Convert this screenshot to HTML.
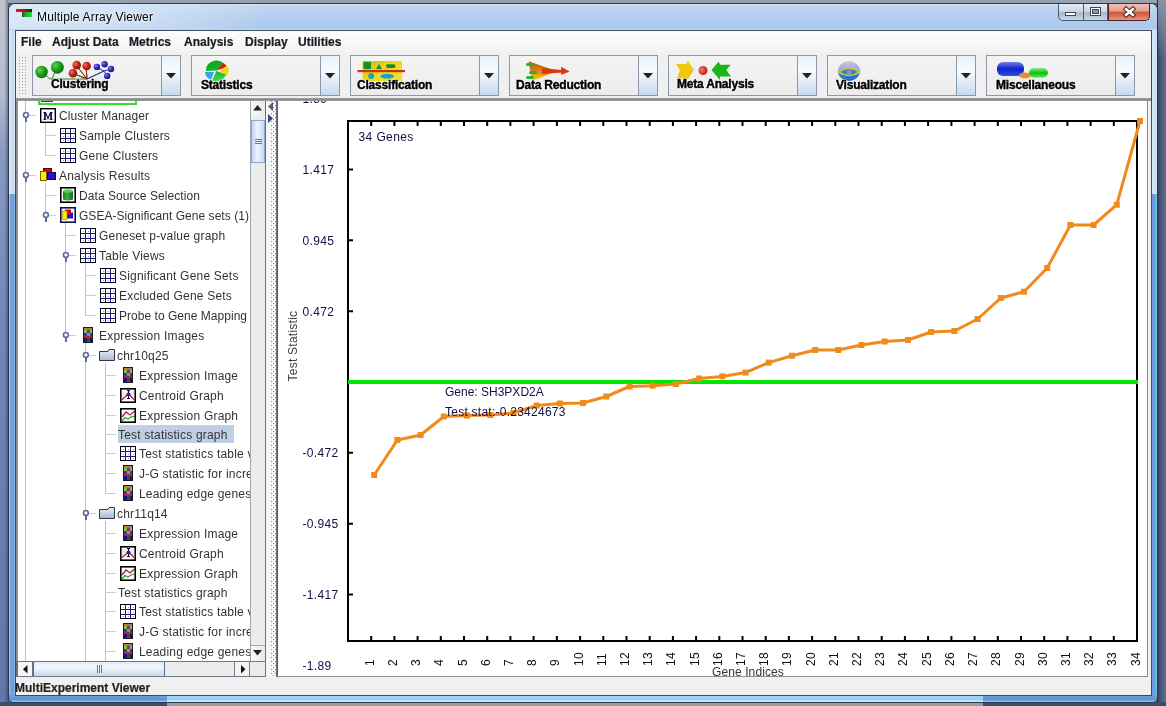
<!DOCTYPE html>
<html><head><meta charset="utf-8"><title>Multiple Array Viewer</title><style>
*{margin:0;padding:0;box-sizing:border-box}
html,body{width:1166px;height:706px;overflow:hidden}
body{position:relative;font-family:"Liberation Sans", sans-serif;background:#4a5878}
.a{position:absolute}
.t{position:absolute;white-space:nowrap;font-size:12px;line-height:14px;color:#333}
</style></head><body>
<div id="w" style="position:absolute;left:0;top:0;width:1166px;height:706px;will-change:transform">
<div class="a" style="left:0;top:0;width:1166px;height:3px;background:#98a0ae"></div>
<div class="a" style="left:0;top:0;width:8px;height:706px;background:linear-gradient(180deg,#c0c6d0 0,#b4bccc 95px,#8a9ac0 150px,#7088b8 320px,#6078a8 706px)"></div>
<div class="a" style="left:5px;top:0;width:3px;height:706px;background:linear-gradient(90deg,rgba(40,50,80,0.1),rgba(40,50,80,0.45))"></div>
<div class="a" style="left:1157px;top:0;width:9px;height:706px;background:linear-gradient(90deg,#102030 0,#3a4468 1px,#4a5878 4px,#5a7090 9px)"></div>
<div class="a" style="left:1158px;top:0;width:8px;height:60px;background:linear-gradient(180deg,#8a94a8,rgba(138,148,168,0))"></div>
<div class="a" style="left:0;top:702px;width:1166px;height:4px;background:#3c4c6c"></div>
<div class="a" style="left:167px;top:702px;width:816px;height:4px;background:#9a9ea2"></div>
<div class="a" style="left:8px;top:3px;width:1150px;height:700px;border:1px solid #283850;border-radius:7px 7px 5px 5px;background:linear-gradient(180deg,#bcd4ee 0,#a9c6e8 26px,#8cb4e4 40px,#6fa0dc 100%)"></div>
<div class="a" style="left:9px;top:4px;width:1148px;height:26px;border-radius:6px 6px 0 0;background:linear-gradient(180deg,#eef6fe 0,#c0d8f2 1px,#b4cfee 12px,#aac8ec 25px,#d8e8f8 26px)"></div>
<div class="a" style="left:9px;top:5px;width:260px;height:24px;border-radius:6px 0 0 0;background:linear-gradient(90deg,rgba(240,246,252,.65),rgba(240,246,252,.35) 60%,rgba(240,246,252,0))"></div>
<div class="a" style="left:9px;top:30px;width:7px;height:666px;background:linear-gradient(90deg,#b8dcf8 0,#78a8dc 1px,#6c9cd8 5px,#a8ccf0 6px)"></div>
<div class="a" style="left:9px;top:30px;width:6px;height:164px;background:linear-gradient(90deg,#f0f8ff 0,#d4e2f2 1px,#cad8ec 5px,#e0ecf8 6px)"></div>
<div class="a" style="left:15px;top:30px;width:1px;height:666px;background:#5a6878"></div>
<div class="a" style="left:1151px;top:30px;width:6px;height:666px;background:linear-gradient(90deg,#a8c8f0 0,#6a9ee0 1px,#6a9ee0 4px,#70c0e0 5px)"></div>
<div class="a" style="left:1151px;top:30px;width:6px;height:164px;background:linear-gradient(90deg,#e8f0fa 0,#d8e6f4 1px,#d4e4f4 4px,#c0e8f4 5px)"></div>
<div class="a" style="left:9px;top:695px;width:1148px;height:7px;border-radius:0 0 5px 5px;background:linear-gradient(180deg,#6aa2dc,#5c94d4 5px,#8cc0f0 6px)"></div>
<div class="a" style="left:167px;top:695px;width:816px;height:7px;background:linear-gradient(180deg,#a0d0f4,#98d0f8 5px,#d0ecfc 6px)"></div>
<div class="a" style="left:16px;top:9px;width:16px;height:3px;background:linear-gradient(90deg,#e01828,#b01020 50%,#202020)"></div>
<div class="a" style="left:22px;top:12px;width:10px;height:5px;background:linear-gradient(90deg,#404040,#10c020 40%,#20e030)"></div>
<div class="t" style="left:37px;top:10px;font-size:12px;letter-spacing:0.17px;color:#000;text-shadow:0 0 6px rgba(255,255,255,.9),0 0 3px rgba(255,255,255,.8)">Multiple Array Viewer</div>
<div class="a" style="left:1058px;top:4px;width:50px;height:17px;border:1px solid #4a5a70;border-top:none;border-radius:0 0 0 5px;background:linear-gradient(180deg,#e4ecf4,#ccd8e6 45%,#a8b8cc 55%,#c8d8ea)"></div>
<div class="a" style="left:1083px;top:4px;width:1px;height:16px;background:#4a5a70"></div>
<div class="a" style="left:1108px;top:4px;width:42px;height:17px;border:1px solid #502020;border-top:none;border-radius:0 0 5px 0;background:linear-gradient(180deg,#f0c0b4,#e4a090 42%,#d05840 52%,#d86850 70%,#e89888)"></div>
<div class="a" style="left:1065px;top:12px;width:11px;height:4px;border:1px solid #3a4a5a;background:#fff"></div>
<div class="a" style="left:1090px;top:7px;width:11px;height:9px;border:1px solid #3a4a5a;background:#fff"></div>
<div class="a" style="left:1092px;top:9px;width:7px;height:5px;border:1px solid #3a4a5a;background:#8898a8"></div>
<svg class="a" style="left:1122px;top:6px" width="14" height="12"><path d="M4 3 L11 9 M11 3 L4 9" stroke="#402020" stroke-width="4.4" stroke-linecap="square"/><path d="M4 3 L11 9 M11 3 L4 9" stroke="#fff" stroke-width="2.6" stroke-linecap="square"/></svg>
<div class="a" style="left:15px;top:30px;width:1137px;height:666px;border:1px solid #404a58;background:#f0f0f0"></div>
<div class="a" style="left:16px;top:31px;width:1135px;height:21px;background:linear-gradient(180deg,#fdfdfd,#f3f3f3)"></div>
<div class="t" style="left:21px;top:35px;font-weight:bold;font-size:12px;letter-spacing:0px;color:#1a1a24;-webkit-text-stroke:0.2px #1a1a24">File</div>
<div class="t" style="left:52px;top:35px;font-weight:bold;font-size:12px;letter-spacing:0px;color:#1a1a24;-webkit-text-stroke:0.2px #1a1a24">Adjust Data</div>
<div class="t" style="left:129px;top:35px;font-weight:bold;font-size:12px;letter-spacing:0px;color:#1a1a24;-webkit-text-stroke:0.2px #1a1a24">Metrics</div>
<div class="t" style="left:184px;top:35px;font-weight:bold;font-size:12px;letter-spacing:0px;color:#1a1a24;-webkit-text-stroke:0.2px #1a1a24">Analysis</div>
<div class="t" style="left:245px;top:35px;font-weight:bold;font-size:12px;letter-spacing:0px;color:#1a1a24;-webkit-text-stroke:0.2px #1a1a24">Display</div>
<div class="t" style="left:298px;top:35px;font-weight:bold;font-size:12px;letter-spacing:0px;color:#1a1a24;-webkit-text-stroke:0.2px #1a1a24">Utilities</div>
<div class="a" style="left:16px;top:52px;width:1135px;height:46px;background:#f0f0f0"></div>
<div class="a" style="left:16px;top:98px;width:1135px;height:2px;background:linear-gradient(180deg,#a8a8a8,#7c7c7c)"></div>
<div class="a" style="left:18px;top:56px;width:10px;height:39px;background-image:radial-gradient(circle,#a0a0a0 0.8px,transparent 1px);background-size:3px 3px"></div>
<div class="a" style="left:32px;top:55px;width:130px;height:41px;border:1px solid #8a98aa;background:linear-gradient(180deg,#f4f4f4,#ececec)"></div>
<div class="a" style="left:161px;top:55px;width:20px;height:41px;border:1px solid #8a98aa;background:linear-gradient(180deg,#e8f0f8,#f8fbff 35%,#c8daee)"></div>
<svg class="a" style="left:166px;top:73px" width="10" height="6"><path d="M0 0 H10 L5 5.5Z" fill="#222"/></svg>
<div class="a" style="left:191px;top:55px;width:130px;height:41px;border:1px solid #8a98aa;background:linear-gradient(180deg,#f4f4f4,#ececec)"></div>
<div class="a" style="left:320px;top:55px;width:20px;height:41px;border:1px solid #8a98aa;background:linear-gradient(180deg,#e8f0f8,#f8fbff 35%,#c8daee)"></div>
<svg class="a" style="left:325px;top:73px" width="10" height="6"><path d="M0 0 H10 L5 5.5Z" fill="#222"/></svg>
<div class="a" style="left:350px;top:55px;width:130px;height:41px;border:1px solid #8a98aa;background:linear-gradient(180deg,#f4f4f4,#ececec)"></div>
<div class="a" style="left:479px;top:55px;width:20px;height:41px;border:1px solid #8a98aa;background:linear-gradient(180deg,#e8f0f8,#f8fbff 35%,#c8daee)"></div>
<svg class="a" style="left:484px;top:73px" width="10" height="6"><path d="M0 0 H10 L5 5.5Z" fill="#222"/></svg>
<div class="a" style="left:509px;top:55px;width:130px;height:41px;border:1px solid #8a98aa;background:linear-gradient(180deg,#f4f4f4,#ececec)"></div>
<div class="a" style="left:638px;top:55px;width:20px;height:41px;border:1px solid #8a98aa;background:linear-gradient(180deg,#e8f0f8,#f8fbff 35%,#c8daee)"></div>
<svg class="a" style="left:643px;top:73px" width="10" height="6"><path d="M0 0 H10 L5 5.5Z" fill="#222"/></svg>
<div class="a" style="left:668px;top:55px;width:130px;height:41px;border:1px solid #8a98aa;background:linear-gradient(180deg,#f4f4f4,#ececec)"></div>
<div class="a" style="left:797px;top:55px;width:20px;height:41px;border:1px solid #8a98aa;background:linear-gradient(180deg,#e8f0f8,#f8fbff 35%,#c8daee)"></div>
<svg class="a" style="left:802px;top:73px" width="10" height="6"><path d="M0 0 H10 L5 5.5Z" fill="#222"/></svg>
<div class="a" style="left:827px;top:55px;width:130px;height:41px;border:1px solid #8a98aa;background:linear-gradient(180deg,#f4f4f4,#ececec)"></div>
<div class="a" style="left:956px;top:55px;width:20px;height:41px;border:1px solid #8a98aa;background:linear-gradient(180deg,#e8f0f8,#f8fbff 35%,#c8daee)"></div>
<svg class="a" style="left:961px;top:73px" width="10" height="6"><path d="M0 0 H10 L5 5.5Z" fill="#222"/></svg>
<div class="a" style="left:986px;top:55px;width:130px;height:41px;border:1px solid #8a98aa;background:linear-gradient(180deg,#f4f4f4,#ececec)"></div>
<div class="a" style="left:1115px;top:55px;width:20px;height:41px;border:1px solid #8a98aa;background:linear-gradient(180deg,#e8f0f8,#f8fbff 35%,#c8daee)"></div>
<svg class="a" style="left:1120px;top:73px" width="10" height="6"><path d="M0 0 H10 L5 5.5Z" fill="#222"/></svg>
<svg class="a" style="left:34px;top:58px" width="82" height="24">
<defs><radialGradient id="gg" cx="0.35" cy="0.35" r="0.7"><stop offset="0" stop-color="#60d060"/><stop offset="0.5" stop-color="#20a020"/><stop offset="1" stop-color="#087008"/></radialGradient>
<radialGradient id="rg" cx="0.35" cy="0.35" r="0.7"><stop offset="0" stop-color="#f07060"/><stop offset="0.5" stop-color="#c82818"/><stop offset="1" stop-color="#801000"/></radialGradient>
<radialGradient id="bg" cx="0.35" cy="0.35" r="0.7"><stop offset="0" stop-color="#8080f0"/><stop offset="0.5" stop-color="#3030c0"/><stop offset="1" stop-color="#101080"/></radialGradient></defs>
<path d="M8 14 L16 21 L53 21 M23 9 L18 21 M42 7 L53 21 M52 8 L53 21 M38 15 L53 21 M53 21 L70 13" stroke="#308030" stroke-width="1" fill="none"/>
<path d="M42 7 L53 21 M52 8 L53 21 M38 15 L53 21" stroke="#a02010" stroke-width="1"/>
<path d="M53 21 L70 13 M62 9 L70 13 M77 11 L70 13 M73 18 L70 13" stroke="#3030a0" stroke-width="1"/>
<circle cx="7.6" cy="14" r="6.2" fill="url(#gg)"/><circle cx="23.4" cy="9.3" r="6.4" fill="url(#gg)"/>
<circle cx="42.7" cy="7.1" r="4.3" fill="url(#rg)"/><circle cx="52.6" cy="8" r="4.3" fill="url(#rg)"/><circle cx="38.9" cy="15.3" r="4.3" fill="url(#rg)"/>
<circle cx="62.9" cy="8.9" r="3.2" fill="url(#bg)"/><circle cx="70.6" cy="6.3" r="3.2" fill="url(#bg)"/><circle cx="77" cy="11" r="3.2" fill="url(#bg)"/><circle cx="73.2" cy="17.9" r="3.2" fill="url(#bg)"/>
</svg>
<svg class="a" style="left:196px;top:56px" width="44" height="28">
<defs><linearGradient id="pg1" x1="0" y1="0" x2="0" y2="1"><stop offset="0" stop-color="#10a020"/><stop offset="1" stop-color="#08c028"/></linearGradient>
<linearGradient id="pg2" x1="0" y1="0" x2="0" y2="1"><stop offset="0" stop-color="#20b030"/><stop offset="1" stop-color="#40e050"/></linearGradient></defs>
<path d="M20.5 14.5 L10 15 A10.5 9.5 0 0 1 28 7.5Z" fill="url(#pg1)"/>
<path d="M20.5 14.5 L27.5 7 A10.5 9.5 0 0 1 31 11Z" fill="#e01808"/>
<path d="M23.5 15 L31 9.5 A10.5 9.5 0 0 1 31 19.5Z" fill="#f0d810"/>
<path d="M20.5 15 L30 18.5 A10.5 9.5 0 0 1 16 24.5Z" fill="url(#pg2)"/>
<path d="M18 16 L15 24 A10.5 9.5 0 0 1 9 16Z" fill="#30a8f0"/>
</svg>
<svg class="a" style="left:357px;top:60px" width="48" height="22">
<defs><linearGradient id="cg1" x1="0" y1="0" x2="1" y2="1"><stop offset="0" stop-color="#c8b818"/><stop offset="0.5" stop-color="#f0d820"/><stop offset="1" stop-color="#e8e040"/></linearGradient></defs>
<rect x="5.5" y="1" width="39.5" height="20" fill="url(#cg1)"/>
<rect x="6.5" y="2" width="7.5" height="7" fill="#189020"/>
<path d="M22 4 L25 9 L19 9Z" fill="#189020"/>
<rect x="29" y="4.2" width="9.5" height="3.8" rx="1.9" fill="#189020"/>
<rect x="0.5" y="10" width="48" height="2.2" fill="#d03010"/>
<circle cx="14.2" cy="15.9" r="3" fill="#20a0b0"/>
<ellipse cx="30.2" cy="16.2" rx="6.7" ry="2.4" fill="#20a0c0"/>
</svg>
<svg class="a" style="left:524px;top:60px" width="50" height="22">
<defs><linearGradient id="dg1" x1="0" y1="0" x2="0" y2="1"><stop offset="0" stop-color="#b06010"/><stop offset="0.5" stop-color="#e08010"/><stop offset="1" stop-color="#f0e010"/></linearGradient></defs>
<path d="M4.6 1.3 L29.6 10 L37.3 10 L37.3 7 L45.5 11.4 L37.3 14.7 L37.3 12.5 L29.6 12.5 L8 21 Z" fill="url(#dg1)"/>
<path d="M18 8 L37.3 10 L37.3 7 L45.5 11.4 L37.3 14.7 L37.3 12.5 L18 14Z" fill="#d83a10"/>
<rect x="2" y="3" width="8" height="3" rx="1.5" fill="#30b030"/>
<rect x="5" y="11" width="8" height="3" rx="1.5" fill="#30b030"/>
<rect x="2" y="16" width="8" height="3" rx="1.5" fill="#30b030"/>
</svg>
<svg class="a" style="left:676px;top:60px" width="60" height="22">
<defs><radialGradient id="mg1" cx="0.35" cy="0.4" r="0.7"><stop offset="0" stop-color="#f08070"/><stop offset="1" stop-color="#b01808"/></radialGradient></defs>
<path d="M0 4 L10 4 L12 1 L18 10 L12 19 L1 18 L4 10Z" fill="#f0c810"/>
<circle cx="27" cy="10.5" r="4.5" fill="url(#mg1)"/>
<path d="M35.5 10 L42.7 1.5 L44 4.8 L54.7 4.8 L50.3 10 L55 16.5 L44 16.5 L44 20Z" fill="#18b818"/>
</svg>
<svg class="a" style="left:837px;top:60px" width="24" height="22">
<defs><linearGradient id="vg" x1="0" y1="0" x2="0" y2="1"><stop offset="0" stop-color="#c8c8e0"/><stop offset="0.45" stop-color="#a0a8e0"/><stop offset="0.55" stop-color="#4080d0"/><stop offset="1" stop-color="#2068c8"/></linearGradient></defs>
<ellipse cx="12" cy="11" rx="11" ry="10" fill="url(#vg)"/>
<path d="M1.5 12 Q12 4.5 22.5 12 Q12 19 1.5 12Z" fill="#5070c0" stroke="#b8d040" stroke-width="1.6"/>
<circle cx="12" cy="12" r="2.5" fill="#8090d0"/>
</svg>
<svg class="a" style="left:996px;top:60px" width="56" height="22">
<defs><linearGradient id="bp" x1="0" y1="0" x2="0" y2="1"><stop offset="0" stop-color="#7080e8"/><stop offset="0.5" stop-color="#1020d0"/><stop offset="1" stop-color="#3050e0"/></linearGradient>
<linearGradient id="gp" x1="0" y1="0" x2="0" y2="1"><stop offset="0" stop-color="#90e890"/><stop offset="0.5" stop-color="#10c010"/><stop offset="1" stop-color="#50e050"/></linearGradient></defs>
<rect x="1" y="2" width="27" height="14" rx="6" fill="url(#bp)"/>
<ellipse cx="29" cy="15.5" rx="6" ry="3" fill="#e89030"/>
<rect x="33" y="8" width="19" height="9.5" rx="4.7" fill="url(#gp)"/>
</svg>
<div class="t" style="left:51px;top:77px;font-weight:bold;font-size:12px;color:#000;letter-spacing:-0.2px;-webkit-text-stroke:0.4px #000;text-shadow:1px 0 0 rgba(255,255,255,.8),-1px 0 0 rgba(255,255,255,.8),0 1px 0 rgba(255,255,255,.8),0 -1px 0 rgba(255,255,255,.8)">Clustering</div>
<div class="t" style="left:201px;top:78px;font-weight:bold;font-size:12px;color:#000;letter-spacing:-0.2px;-webkit-text-stroke:0.4px #000;text-shadow:1px 0 0 rgba(255,255,255,.8),-1px 0 0 rgba(255,255,255,.8),0 1px 0 rgba(255,255,255,.8),0 -1px 0 rgba(255,255,255,.8)">Statistics</div>
<div class="t" style="left:357px;top:78px;font-weight:bold;font-size:12px;color:#000;letter-spacing:-0.2px;-webkit-text-stroke:0.4px #000;text-shadow:1px 0 0 rgba(255,255,255,.8),-1px 0 0 rgba(255,255,255,.8),0 1px 0 rgba(255,255,255,.8),0 -1px 0 rgba(255,255,255,.8)">Classification</div>
<div class="t" style="left:516px;top:78px;font-weight:bold;font-size:12px;color:#000;letter-spacing:-0.2px;-webkit-text-stroke:0.4px #000;text-shadow:1px 0 0 rgba(255,255,255,.8),-1px 0 0 rgba(255,255,255,.8),0 1px 0 rgba(255,255,255,.8),0 -1px 0 rgba(255,255,255,.8)">Data Reduction</div>
<div class="t" style="left:677px;top:77px;font-weight:bold;font-size:12px;color:#000;letter-spacing:-0.2px;-webkit-text-stroke:0.4px #000;text-shadow:1px 0 0 rgba(255,255,255,.8),-1px 0 0 rgba(255,255,255,.8),0 1px 0 rgba(255,255,255,.8),0 -1px 0 rgba(255,255,255,.8)">Meta Analysis</div>
<div class="t" style="left:836px;top:78px;font-weight:bold;font-size:12px;color:#000;letter-spacing:-0.2px;-webkit-text-stroke:0.4px #000;text-shadow:1px 0 0 rgba(255,255,255,.8),-1px 0 0 rgba(255,255,255,.8),0 1px 0 rgba(255,255,255,.8),0 -1px 0 rgba(255,255,255,.8)">Visualization</div>
<div class="t" style="left:996px;top:78px;font-weight:bold;font-size:12px;color:#000;letter-spacing:-0.2px;-webkit-text-stroke:0.4px #000;text-shadow:1px 0 0 rgba(255,255,255,.8),-1px 0 0 rgba(255,255,255,.8),0 1px 0 rgba(255,255,255,.8),0 -1px 0 rgba(255,255,255,.8)">Miscellaneous</div>
<div class="a" style="left:16px;top:100px;width:250px;height:577px;background:#fff;border-left:2px solid #8a8f96"></div>
<div class="a" style="left:18px;top:100px;width:232px;height:561px;overflow:hidden;background:#fff">
<div class="a" style="left:7px;top:0px;width:1px;height:561px;background:#b8c2d4"></div>
<div class="a" style="left:27px;top:23px;width:1px;height:32px;background:#b8c2d4"></div>
<div class="a" style="left:27px;top:83px;width:1px;height:32px;background:#b8c2d4"></div>
<div class="a" style="left:47px;top:123px;width:1px;height:112px;background:#b8c2d4"></div>
<div class="a" style="left:67px;top:163px;width:1px;height:52px;background:#b8c2d4"></div>
<div class="a" style="left:67px;top:243px;width:1px;height:318px;background:#b8c2d4"></div>
<div class="a" style="left:87px;top:263px;width:1px;height:130px;background:#b8c2d4"></div>
<div class="a" style="left:87px;top:421px;width:1px;height:140px;background:#b8c2d4"></div>
<div class="a" style="left:20px;top:-3px;width:99px;height:8px;border:2px solid #30e030;border-top:none"></div>
<div class="a" style="left:23px;top:0px;width:12px;height:2px;background:#802020"></div>
<div class="a" style="left:10px;top:15px;width:8px;height:1px;background:#c8ccd6"></div>
<svg class="a" style="left:4px;top:11px" width="8" height="12"><circle cx="3.9" cy="3.9" r="2.4" fill="#fff" stroke="#5a6a9a" stroke-width="1.6"/><rect x="3" y="6" width="2" height="5" fill="#5a6a9a"/></svg>

<svg class="a" style="left:22px;top:8px" width="16" height="15"><rect x="0.7" y="0.7" width="14.6" height="13.6" fill="#fff" stroke="#000" stroke-width="1.4"/><path d="M3.2 4 H6 L8 9 L10 4 H12.8 V4.8 H12 V11.2 H12.8 V12 H9.6 V11.2 H10.2 V6.5 L8.3 11.5 H7.7 L5.8 6.5 V11.2 H6.4 V12 H3.2 V11.2 H4 V4.8 H3.2Z" fill="#1a1440"/></svg>
<div class="t" style="left:41px;top:9px;color:#333;letter-spacing:0.1px">Cluster Manager</div>
<div class="a" style="left:27px;top:35px;width:11px;height:1px;background:#c8ccd6"></div>

<svg class="a" style="left:42px;top:28px" width="16" height="15"><rect x="0" y="0" width="16" height="15" fill="#1c1a78"/><rect x="0.5" y="0.5" width="15" height="14" fill="none" stroke="#000018" stroke-width="1"/><g fill="#fff"><rect x="1" y="1" width="4" height="4"/><rect x="1" y="6" width="4" height="4"/><rect x="1" y="11" width="4" height="3"/><rect x="6" y="1" width="4" height="4"/><rect x="6" y="6" width="4" height="4"/><rect x="6" y="11" width="4" height="3"/><rect x="11" y="1" width="4" height="4"/><rect x="11" y="6" width="4" height="4"/><rect x="11" y="11" width="4" height="3"/></g><g fill="#9898d0"><rect x="3" y="3" width="1" height="1"/><rect x="3" y="8" width="1" height="1"/><rect x="3" y="12" width="1" height="1"/><rect x="8" y="3" width="1" height="1"/><rect x="8" y="8" width="1" height="1"/><rect x="8" y="12" width="1" height="1"/><rect x="13" y="3" width="1" height="1"/><rect x="13" y="8" width="1" height="1"/><rect x="13" y="12" width="1" height="1"/></g></svg>
<div class="t" style="left:61px;top:29px;color:#333;letter-spacing:0.2px">Sample Clusters</div>
<div class="a" style="left:27px;top:55px;width:11px;height:1px;background:#c8ccd6"></div>

<svg class="a" style="left:42px;top:48px" width="16" height="15"><rect x="0" y="0" width="16" height="15" fill="#1c1a78"/><rect x="0.5" y="0.5" width="15" height="14" fill="none" stroke="#000018" stroke-width="1"/><g fill="#fff"><rect x="1" y="1" width="4" height="4"/><rect x="1" y="6" width="4" height="4"/><rect x="1" y="11" width="4" height="3"/><rect x="6" y="1" width="4" height="4"/><rect x="6" y="6" width="4" height="4"/><rect x="6" y="11" width="4" height="3"/><rect x="11" y="1" width="4" height="4"/><rect x="11" y="6" width="4" height="4"/><rect x="11" y="11" width="4" height="3"/></g><g fill="#9898d0"><rect x="3" y="3" width="1" height="1"/><rect x="3" y="8" width="1" height="1"/><rect x="3" y="12" width="1" height="1"/><rect x="8" y="3" width="1" height="1"/><rect x="8" y="8" width="1" height="1"/><rect x="8" y="12" width="1" height="1"/><rect x="13" y="3" width="1" height="1"/><rect x="13" y="8" width="1" height="1"/><rect x="13" y="12" width="1" height="1"/></g></svg>
<div class="t" style="left:61px;top:49px;color:#333;letter-spacing:0.2px">Gene Clusters</div>
<div class="a" style="left:10px;top:75px;width:8px;height:1px;background:#c8ccd6"></div>
<svg class="a" style="left:4px;top:71px" width="8" height="12"><circle cx="3.9" cy="3.9" r="2.4" fill="#fff" stroke="#5a6a9a" stroke-width="1.6"/><rect x="3" y="6" width="2" height="5" fill="#5a6a9a"/></svg>

<svg class="a" style="left:22px;top:68px" width="17" height="16"><rect x="3.5" y="0.5" width="8" height="7" fill="#e00000" stroke="#600" stroke-width="1"/><rect x="7.5" y="4.5" width="8" height="7" fill="#2010d0" stroke="#100060" stroke-width="1"/><rect x="0.5" y="3.5" width="6" height="9" fill="#f8f000" stroke="#806000" stroke-width="1"/></svg>
<div class="t" style="left:41px;top:69px;color:#333;letter-spacing:0.2px">Analysis Results</div>
<div class="a" style="left:27px;top:95px;width:11px;height:1px;background:#c8ccd6"></div>

<svg class="a" style="left:42px;top:87px" width="16" height="16"><rect x="0.8" y="0.8" width="14.4" height="14.4" fill="#fff" stroke="#000" stroke-width="1.6"/><defs><linearGradient id="cyl" x1="0" y1="0" x2="1" y2="0"><stop offset="0" stop-color="#108018"/><stop offset="0.4" stop-color="#40b040"/><stop offset="1" stop-color="#106818"/></linearGradient></defs><path d="M3 4 V12.5 Q8 14.5 13 12.5 V4Z" fill="url(#cyl)"/><ellipse cx="8" cy="4" rx="5" ry="1.8" fill="#60c860"/></svg>
<div class="t" style="left:61px;top:89px;color:#333;letter-spacing:0.07px">Data Source Selection</div>
<div class="a" style="left:30px;top:115px;width:8px;height:1px;background:#c8ccd6"></div>
<svg class="a" style="left:24px;top:111px" width="8" height="12"><circle cx="3.9" cy="3.9" r="2.4" fill="#fff" stroke="#5a6a9a" stroke-width="1.6"/><rect x="3" y="6" width="2" height="5" fill="#5a6a9a"/></svg>

<svg class="a" style="left:42px;top:107px" width="16" height="16"><rect x="0.8" y="0.8" width="14.4" height="14.4" fill="#fff" stroke="#101050" stroke-width="1.6"/><rect x="7" y="5.5" width="6" height="6" fill="#2010d0"/><rect x="5" y="2.5" width="6" height="5" fill="#e00000"/><rect x="2.5" y="4" width="4.5" height="8.5" fill="#f8f000" stroke="#a08000" stroke-width="0.6"/></svg>
<div class="t" style="left:61px;top:109px;color:#333;letter-spacing:0.04px">GSEA-Significant Gene sets (1)</div>
<div class="a" style="left:47px;top:135px;width:11px;height:1px;background:#c8ccd6"></div>

<svg class="a" style="left:62px;top:128px" width="16" height="15"><rect x="0" y="0" width="16" height="15" fill="#1c1a78"/><rect x="0.5" y="0.5" width="15" height="14" fill="none" stroke="#000018" stroke-width="1"/><g fill="#fff"><rect x="1" y="1" width="4" height="4"/><rect x="1" y="6" width="4" height="4"/><rect x="1" y="11" width="4" height="3"/><rect x="6" y="1" width="4" height="4"/><rect x="6" y="6" width="4" height="4"/><rect x="6" y="11" width="4" height="3"/><rect x="11" y="1" width="4" height="4"/><rect x="11" y="6" width="4" height="4"/><rect x="11" y="11" width="4" height="3"/></g><g fill="#9898d0"><rect x="3" y="3" width="1" height="1"/><rect x="3" y="8" width="1" height="1"/><rect x="3" y="12" width="1" height="1"/><rect x="8" y="3" width="1" height="1"/><rect x="8" y="8" width="1" height="1"/><rect x="8" y="12" width="1" height="1"/><rect x="13" y="3" width="1" height="1"/><rect x="13" y="8" width="1" height="1"/><rect x="13" y="12" width="1" height="1"/></g></svg>
<div class="t" style="left:81px;top:129px;color:#333;letter-spacing:0.2px">Geneset p-value graph</div>
<div class="a" style="left:50px;top:155px;width:8px;height:1px;background:#c8ccd6"></div>
<svg class="a" style="left:44px;top:151px" width="8" height="12"><circle cx="3.9" cy="3.9" r="2.4" fill="#fff" stroke="#5a6a9a" stroke-width="1.6"/><rect x="3" y="6" width="2" height="5" fill="#5a6a9a"/></svg>

<svg class="a" style="left:62px;top:148px" width="16" height="15"><rect x="0" y="0" width="16" height="15" fill="#1c1a78"/><rect x="0.5" y="0.5" width="15" height="14" fill="none" stroke="#000018" stroke-width="1"/><g fill="#fff"><rect x="1" y="1" width="4" height="4"/><rect x="1" y="6" width="4" height="4"/><rect x="1" y="11" width="4" height="3"/><rect x="6" y="1" width="4" height="4"/><rect x="6" y="6" width="4" height="4"/><rect x="6" y="11" width="4" height="3"/><rect x="11" y="1" width="4" height="4"/><rect x="11" y="6" width="4" height="4"/><rect x="11" y="11" width="4" height="3"/></g><g fill="#9898d0"><rect x="3" y="3" width="1" height="1"/><rect x="3" y="8" width="1" height="1"/><rect x="3" y="12" width="1" height="1"/><rect x="8" y="3" width="1" height="1"/><rect x="8" y="8" width="1" height="1"/><rect x="8" y="12" width="1" height="1"/><rect x="13" y="3" width="1" height="1"/><rect x="13" y="8" width="1" height="1"/><rect x="13" y="12" width="1" height="1"/></g></svg>
<div class="t" style="left:81px;top:149px;color:#333;letter-spacing:0.2px">Table Views</div>
<div class="a" style="left:67px;top:175px;width:11px;height:1px;background:#c8ccd6"></div>

<svg class="a" style="left:82px;top:168px" width="16" height="15"><rect x="0" y="0" width="16" height="15" fill="#1c1a78"/><rect x="0.5" y="0.5" width="15" height="14" fill="none" stroke="#000018" stroke-width="1"/><g fill="#fff"><rect x="1" y="1" width="4" height="4"/><rect x="1" y="6" width="4" height="4"/><rect x="1" y="11" width="4" height="3"/><rect x="6" y="1" width="4" height="4"/><rect x="6" y="6" width="4" height="4"/><rect x="6" y="11" width="4" height="3"/><rect x="11" y="1" width="4" height="4"/><rect x="11" y="6" width="4" height="4"/><rect x="11" y="11" width="4" height="3"/></g><g fill="#9898d0"><rect x="3" y="3" width="1" height="1"/><rect x="3" y="8" width="1" height="1"/><rect x="3" y="12" width="1" height="1"/><rect x="8" y="3" width="1" height="1"/><rect x="8" y="8" width="1" height="1"/><rect x="8" y="12" width="1" height="1"/><rect x="13" y="3" width="1" height="1"/><rect x="13" y="8" width="1" height="1"/><rect x="13" y="12" width="1" height="1"/></g></svg>
<div class="t" style="left:101px;top:169px;color:#333;letter-spacing:0.2px">Significant Gene Sets</div>
<div class="a" style="left:67px;top:195px;width:11px;height:1px;background:#c8ccd6"></div>

<svg class="a" style="left:82px;top:188px" width="16" height="15"><rect x="0" y="0" width="16" height="15" fill="#1c1a78"/><rect x="0.5" y="0.5" width="15" height="14" fill="none" stroke="#000018" stroke-width="1"/><g fill="#fff"><rect x="1" y="1" width="4" height="4"/><rect x="1" y="6" width="4" height="4"/><rect x="1" y="11" width="4" height="3"/><rect x="6" y="1" width="4" height="4"/><rect x="6" y="6" width="4" height="4"/><rect x="6" y="11" width="4" height="3"/><rect x="11" y="1" width="4" height="4"/><rect x="11" y="6" width="4" height="4"/><rect x="11" y="11" width="4" height="3"/></g><g fill="#9898d0"><rect x="3" y="3" width="1" height="1"/><rect x="3" y="8" width="1" height="1"/><rect x="3" y="12" width="1" height="1"/><rect x="8" y="3" width="1" height="1"/><rect x="8" y="8" width="1" height="1"/><rect x="8" y="12" width="1" height="1"/><rect x="13" y="3" width="1" height="1"/><rect x="13" y="8" width="1" height="1"/><rect x="13" y="12" width="1" height="1"/></g></svg>
<div class="t" style="left:101px;top:189px;color:#333;letter-spacing:0.2px">Excluded Gene Sets</div>
<div class="a" style="left:67px;top:215px;width:11px;height:1px;background:#c8ccd6"></div>

<svg class="a" style="left:82px;top:208px" width="16" height="15"><rect x="0" y="0" width="16" height="15" fill="#1c1a78"/><rect x="0.5" y="0.5" width="15" height="14" fill="none" stroke="#000018" stroke-width="1"/><g fill="#fff"><rect x="1" y="1" width="4" height="4"/><rect x="1" y="6" width="4" height="4"/><rect x="1" y="11" width="4" height="3"/><rect x="6" y="1" width="4" height="4"/><rect x="6" y="6" width="4" height="4"/><rect x="6" y="11" width="4" height="3"/><rect x="11" y="1" width="4" height="4"/><rect x="11" y="6" width="4" height="4"/><rect x="11" y="11" width="4" height="3"/></g><g fill="#9898d0"><rect x="3" y="3" width="1" height="1"/><rect x="3" y="8" width="1" height="1"/><rect x="3" y="12" width="1" height="1"/><rect x="8" y="3" width="1" height="1"/><rect x="8" y="8" width="1" height="1"/><rect x="8" y="12" width="1" height="1"/><rect x="13" y="3" width="1" height="1"/><rect x="13" y="8" width="1" height="1"/><rect x="13" y="12" width="1" height="1"/></g></svg>
<div class="t" style="left:101px;top:209px;color:#333;letter-spacing:0.03px">Probe to Gene Mapping</div>
<div class="a" style="left:50px;top:235px;width:8px;height:1px;background:#c8ccd6"></div>
<svg class="a" style="left:44px;top:231px" width="8" height="12"><circle cx="3.9" cy="3.9" r="2.4" fill="#fff" stroke="#5a6a9a" stroke-width="1.6"/><rect x="3" y="6" width="2" height="5" fill="#5a6a9a"/></svg>

<svg class="a" style="left:65px;top:227px" width="10" height="16"><rect width="10" height="16" fill="#181828"/><rect x="1" y="1" width="3" height="2" fill="#c88020"/><rect x="4" y="1" width="3" height="2" fill="#40a0a0"/><rect x="7" y="1" width="2" height="2" fill="#c88020"/><rect x="1" y="3" width="3" height="3" fill="#80c040"/><rect x="4" y="3" width="3" height="3" fill="#b02060"/><rect x="7" y="3" width="2" height="3" fill="#80c040"/><rect x="1" y="6" width="8" height="3" fill="#2840b0"/><rect x="4" y="6" width="3" height="3" fill="#40b0d8"/><rect x="1" y="9" width="8" height="2" fill="#d01828"/><rect x="4" y="9" width="3" height="2" fill="#a03020"/><rect x="1" y="11" width="8" height="4" fill="#101878"/><rect x="4" y="11" width="3" height="4" fill="#405020"/></svg>
<div class="t" style="left:81px;top:229px;color:#333;letter-spacing:0.2px">Expression Images</div>
<div class="a" style="left:70px;top:255px;width:8px;height:1px;background:#c8ccd6"></div>
<svg class="a" style="left:64px;top:251px" width="8" height="12"><circle cx="3.9" cy="3.9" r="2.4" fill="#fff" stroke="#5a6a9a" stroke-width="1.6"/><rect x="3" y="6" width="2" height="5" fill="#5a6a9a"/></svg>

<svg class="a" style="left:81px;top:248px" width="17" height="14"><path d="M0.5 3.5 H9 L10 1.5 H15.5 V12.5 H0.5Z" fill="url(#fg)" stroke="#303848" stroke-width="1"/><defs><linearGradient id="fg" x1="0" y1="0" x2="0" y2="1"><stop offset="0" stop-color="#e8eef8"/><stop offset="1" stop-color="#a8b8d0"/></linearGradient></defs></svg>
<div class="t" style="left:99px;top:249px;color:#333;letter-spacing:0.2px">chr10q25</div>
<div class="a" style="left:87px;top:275px;width:11px;height:1px;background:#c8ccd6"></div>

<svg class="a" style="left:105px;top:267px" width="10" height="16"><rect width="10" height="16" fill="#181828"/><rect x="1" y="1" width="3" height="2" fill="#c88020"/><rect x="4" y="1" width="3" height="2" fill="#40a0a0"/><rect x="7" y="1" width="2" height="2" fill="#c88020"/><rect x="1" y="3" width="3" height="3" fill="#80c040"/><rect x="4" y="3" width="3" height="3" fill="#b02060"/><rect x="7" y="3" width="2" height="3" fill="#80c040"/><rect x="1" y="6" width="8" height="3" fill="#2840b0"/><rect x="4" y="6" width="3" height="3" fill="#40b0d8"/><rect x="1" y="9" width="8" height="2" fill="#d01828"/><rect x="4" y="9" width="3" height="2" fill="#a03020"/><rect x="1" y="11" width="8" height="4" fill="#101878"/><rect x="4" y="11" width="3" height="4" fill="#405020"/></svg>
<div class="t" style="left:121px;top:269px;color:#333;letter-spacing:0.2px">Expression Image</div>
<div class="a" style="left:87px;top:295px;width:11px;height:1px;background:#c8ccd6"></div>

<svg class="a" style="left:102px;top:288px" width="16" height="15"><rect x="0.8" y="0.8" width="14.4" height="13.4" fill="#fff" stroke="#000" stroke-width="1.6"/><path d="M2 3 H14 V10 L8 5 L2 10Z" fill="#fce8f4"/><path d="M1.5 12 L8.5 6 L14.5 12" stroke="#c02050" stroke-width="1.3" fill="none"/><path d="M8.5 2.5 V10.5 M7 2.5 H10 M7 10.5 H10" stroke="#000" stroke-width="1"/><circle cx="8.5" cy="6.5" r="2" fill="#2020c0"/></svg>
<div class="t" style="left:121px;top:289px;color:#333;letter-spacing:0.2px">Centroid Graph</div>
<div class="a" style="left:87px;top:315px;width:11px;height:1px;background:#c8ccd6"></div>

<svg class="a" style="left:102px;top:308px" width="16" height="15"><rect x="0.8" y="0.8" width="14.4" height="13.4" fill="#fff" stroke="#000" stroke-width="1.6"/><path d="M2 9 L6 4 L10 7 L14.5 3" stroke="#b02040" stroke-width="1.3" fill="none"/><path d="M2 13 L5 9.5 L8 11 L11 9 L14.5 8" stroke="#30a030" stroke-width="1.3" fill="none"/></svg>
<div class="t" style="left:121px;top:309px;color:#333;letter-spacing:0.2px">Expression Graph</div>
<div class="a" style="left:87px;top:334px;width:11px;height:1px;background:#c8ccd6"></div>
<div class="a" style="left:100px;top:325px;width:116px;height:18px;background:#c0d0e4"></div>
<div class="t" style="left:100px;top:328px;color:#333;letter-spacing:0.2px">Test statistics graph</div>
<div class="a" style="left:87px;top:353px;width:11px;height:1px;background:#c8ccd6"></div>

<svg class="a" style="left:102px;top:346px" width="16" height="15"><rect x="0" y="0" width="16" height="15" fill="#1c1a78"/><rect x="0.5" y="0.5" width="15" height="14" fill="none" stroke="#000018" stroke-width="1"/><g fill="#fff"><rect x="1" y="1" width="4" height="4"/><rect x="1" y="6" width="4" height="4"/><rect x="1" y="11" width="4" height="3"/><rect x="6" y="1" width="4" height="4"/><rect x="6" y="6" width="4" height="4"/><rect x="6" y="11" width="4" height="3"/><rect x="11" y="1" width="4" height="4"/><rect x="11" y="6" width="4" height="4"/><rect x="11" y="11" width="4" height="3"/></g><g fill="#9898d0"><rect x="3" y="3" width="1" height="1"/><rect x="3" y="8" width="1" height="1"/><rect x="3" y="12" width="1" height="1"/><rect x="8" y="3" width="1" height="1"/><rect x="8" y="8" width="1" height="1"/><rect x="8" y="12" width="1" height="1"/><rect x="13" y="3" width="1" height="1"/><rect x="13" y="8" width="1" height="1"/><rect x="13" y="12" width="1" height="1"/></g></svg>
<div class="t" style="left:121px;top:347px;color:#333;letter-spacing:0.2px">Test statistics table view</div>
<div class="a" style="left:87px;top:373px;width:11px;height:1px;background:#c8ccd6"></div>

<svg class="a" style="left:105px;top:365px" width="10" height="16"><rect width="10" height="16" fill="#181828"/><rect x="1" y="1" width="3" height="2" fill="#c88020"/><rect x="4" y="1" width="3" height="2" fill="#40a0a0"/><rect x="7" y="1" width="2" height="2" fill="#c88020"/><rect x="1" y="3" width="3" height="3" fill="#80c040"/><rect x="4" y="3" width="3" height="3" fill="#b02060"/><rect x="7" y="3" width="2" height="3" fill="#80c040"/><rect x="1" y="6" width="8" height="3" fill="#2840b0"/><rect x="4" y="6" width="3" height="3" fill="#40b0d8"/><rect x="1" y="9" width="8" height="2" fill="#d01828"/><rect x="4" y="9" width="3" height="2" fill="#a03020"/><rect x="1" y="11" width="8" height="4" fill="#101878"/><rect x="4" y="11" width="3" height="4" fill="#405020"/></svg>
<div class="t" style="left:121px;top:367px;color:#333;letter-spacing:0.2px">J-G statistic for increasing</div>
<div class="a" style="left:87px;top:393px;width:11px;height:1px;background:#c8ccd6"></div>

<svg class="a" style="left:105px;top:385px" width="10" height="16"><rect width="10" height="16" fill="#181828"/><rect x="1" y="1" width="3" height="2" fill="#c88020"/><rect x="4" y="1" width="3" height="2" fill="#40a0a0"/><rect x="7" y="1" width="2" height="2" fill="#c88020"/><rect x="1" y="3" width="3" height="3" fill="#80c040"/><rect x="4" y="3" width="3" height="3" fill="#b02060"/><rect x="7" y="3" width="2" height="3" fill="#80c040"/><rect x="1" y="6" width="8" height="3" fill="#2840b0"/><rect x="4" y="6" width="3" height="3" fill="#40b0d8"/><rect x="1" y="9" width="8" height="2" fill="#d01828"/><rect x="4" y="9" width="3" height="2" fill="#a03020"/><rect x="1" y="11" width="8" height="4" fill="#101878"/><rect x="4" y="11" width="3" height="4" fill="#405020"/></svg>
<div class="t" style="left:121px;top:387px;color:#333;letter-spacing:0.2px">Leading edge genes</div>
<div class="a" style="left:70px;top:413px;width:8px;height:1px;background:#c8ccd6"></div>
<svg class="a" style="left:64px;top:409px" width="8" height="12"><circle cx="3.9" cy="3.9" r="2.4" fill="#fff" stroke="#5a6a9a" stroke-width="1.6"/><rect x="3" y="6" width="2" height="5" fill="#5a6a9a"/></svg>

<svg class="a" style="left:81px;top:406px" width="17" height="14"><path d="M0.5 3.5 H9 L10 1.5 H15.5 V12.5 H0.5Z" fill="url(#fg)" stroke="#303848" stroke-width="1"/><defs><linearGradient id="fg" x1="0" y1="0" x2="0" y2="1"><stop offset="0" stop-color="#e8eef8"/><stop offset="1" stop-color="#a8b8d0"/></linearGradient></defs></svg>
<div class="t" style="left:99px;top:407px;color:#333;letter-spacing:0.2px">chr11q14</div>
<div class="a" style="left:87px;top:433px;width:11px;height:1px;background:#c8ccd6"></div>

<svg class="a" style="left:105px;top:425px" width="10" height="16"><rect width="10" height="16" fill="#181828"/><rect x="1" y="1" width="3" height="2" fill="#c88020"/><rect x="4" y="1" width="3" height="2" fill="#40a0a0"/><rect x="7" y="1" width="2" height="2" fill="#c88020"/><rect x="1" y="3" width="3" height="3" fill="#80c040"/><rect x="4" y="3" width="3" height="3" fill="#b02060"/><rect x="7" y="3" width="2" height="3" fill="#80c040"/><rect x="1" y="6" width="8" height="3" fill="#2840b0"/><rect x="4" y="6" width="3" height="3" fill="#40b0d8"/><rect x="1" y="9" width="8" height="2" fill="#d01828"/><rect x="4" y="9" width="3" height="2" fill="#a03020"/><rect x="1" y="11" width="8" height="4" fill="#101878"/><rect x="4" y="11" width="3" height="4" fill="#405020"/></svg>
<div class="t" style="left:121px;top:427px;color:#333;letter-spacing:0.2px">Expression Image</div>
<div class="a" style="left:87px;top:453px;width:11px;height:1px;background:#c8ccd6"></div>

<svg class="a" style="left:102px;top:446px" width="16" height="15"><rect x="0.8" y="0.8" width="14.4" height="13.4" fill="#fff" stroke="#000" stroke-width="1.6"/><path d="M2 3 H14 V10 L8 5 L2 10Z" fill="#fce8f4"/><path d="M1.5 12 L8.5 6 L14.5 12" stroke="#c02050" stroke-width="1.3" fill="none"/><path d="M8.5 2.5 V10.5 M7 2.5 H10 M7 10.5 H10" stroke="#000" stroke-width="1"/><circle cx="8.5" cy="6.5" r="2" fill="#2020c0"/></svg>
<div class="t" style="left:121px;top:447px;color:#333;letter-spacing:0.2px">Centroid Graph</div>
<div class="a" style="left:87px;top:473px;width:11px;height:1px;background:#c8ccd6"></div>

<svg class="a" style="left:102px;top:466px" width="16" height="15"><rect x="0.8" y="0.8" width="14.4" height="13.4" fill="#fff" stroke="#000" stroke-width="1.6"/><path d="M2 9 L6 4 L10 7 L14.5 3" stroke="#b02040" stroke-width="1.3" fill="none"/><path d="M2 13 L5 9.5 L8 11 L11 9 L14.5 8" stroke="#30a030" stroke-width="1.3" fill="none"/></svg>
<div class="t" style="left:121px;top:467px;color:#333;letter-spacing:0.2px">Expression Graph</div>
<div class="a" style="left:87px;top:492px;width:11px;height:1px;background:#c8ccd6"></div>
<div class="t" style="left:100px;top:486px;color:#333;letter-spacing:0.2px">Test statistics graph</div>
<div class="a" style="left:87px;top:511px;width:11px;height:1px;background:#c8ccd6"></div>

<svg class="a" style="left:102px;top:504px" width="16" height="15"><rect x="0" y="0" width="16" height="15" fill="#1c1a78"/><rect x="0.5" y="0.5" width="15" height="14" fill="none" stroke="#000018" stroke-width="1"/><g fill="#fff"><rect x="1" y="1" width="4" height="4"/><rect x="1" y="6" width="4" height="4"/><rect x="1" y="11" width="4" height="3"/><rect x="6" y="1" width="4" height="4"/><rect x="6" y="6" width="4" height="4"/><rect x="6" y="11" width="4" height="3"/><rect x="11" y="1" width="4" height="4"/><rect x="11" y="6" width="4" height="4"/><rect x="11" y="11" width="4" height="3"/></g><g fill="#9898d0"><rect x="3" y="3" width="1" height="1"/><rect x="3" y="8" width="1" height="1"/><rect x="3" y="12" width="1" height="1"/><rect x="8" y="3" width="1" height="1"/><rect x="8" y="8" width="1" height="1"/><rect x="8" y="12" width="1" height="1"/><rect x="13" y="3" width="1" height="1"/><rect x="13" y="8" width="1" height="1"/><rect x="13" y="12" width="1" height="1"/></g></svg>
<div class="t" style="left:121px;top:505px;color:#333;letter-spacing:0.2px">Test statistics table view</div>
<div class="a" style="left:87px;top:531px;width:11px;height:1px;background:#c8ccd6"></div>

<svg class="a" style="left:105px;top:523px" width="10" height="16"><rect width="10" height="16" fill="#181828"/><rect x="1" y="1" width="3" height="2" fill="#c88020"/><rect x="4" y="1" width="3" height="2" fill="#40a0a0"/><rect x="7" y="1" width="2" height="2" fill="#c88020"/><rect x="1" y="3" width="3" height="3" fill="#80c040"/><rect x="4" y="3" width="3" height="3" fill="#b02060"/><rect x="7" y="3" width="2" height="3" fill="#80c040"/><rect x="1" y="6" width="8" height="3" fill="#2840b0"/><rect x="4" y="6" width="3" height="3" fill="#40b0d8"/><rect x="1" y="9" width="8" height="2" fill="#d01828"/><rect x="4" y="9" width="3" height="2" fill="#a03020"/><rect x="1" y="11" width="8" height="4" fill="#101878"/><rect x="4" y="11" width="3" height="4" fill="#405020"/></svg>
<div class="t" style="left:121px;top:525px;color:#333;letter-spacing:0.2px">J-G statistic for increasing</div>
<div class="a" style="left:87px;top:551px;width:11px;height:1px;background:#c8ccd6"></div>

<svg class="a" style="left:105px;top:543px" width="10" height="16"><rect width="10" height="16" fill="#181828"/><rect x="1" y="1" width="3" height="2" fill="#c88020"/><rect x="4" y="1" width="3" height="2" fill="#40a0a0"/><rect x="7" y="1" width="2" height="2" fill="#c88020"/><rect x="1" y="3" width="3" height="3" fill="#80c040"/><rect x="4" y="3" width="3" height="3" fill="#b02060"/><rect x="7" y="3" width="2" height="3" fill="#80c040"/><rect x="1" y="6" width="8" height="3" fill="#2840b0"/><rect x="4" y="6" width="3" height="3" fill="#40b0d8"/><rect x="1" y="9" width="8" height="2" fill="#d01828"/><rect x="4" y="9" width="3" height="2" fill="#a03020"/><rect x="1" y="11" width="8" height="4" fill="#101878"/><rect x="4" y="11" width="3" height="4" fill="#405020"/></svg>
<div class="t" style="left:121px;top:545px;color:#333;letter-spacing:0.2px">Leading edge genes</div>
</div>
<div class="a" style="left:250px;top:100px;width:16px;height:577px;background:#ececec;border-left:1px solid #9aa8b8;border-right:1px solid #707070;border-bottom:1px solid #707070"></div>
<div class="a" style="left:251px;top:660px;width:14px;height:1px;background:#9098a4"></div>
<div class="a" style="left:251px;top:101px;width:14px;height:16px;background:linear-gradient(90deg,#f8f8f8,#eaeaea)"></div>
<svg class="a" style="left:253px;top:105px" width="10" height="6"><path d="M0 5.5 H9 L4.5 0Z" fill="#222"/></svg>
<div class="a" style="left:251px;top:120px;width:14px;height:43px;border:1px solid #90a8c8;background:linear-gradient(90deg,#c0d4ee,#eef4fc 45%,#c8daf0)"></div>
<div class="a" style="left:255px;top:139px;width:7px;height:1px;background:#6a7aa0;box-shadow:0 2px 0 #6a7aa0,0 4px 0 #6a7aa0"></div>
<div class="a" style="left:251px;top:645px;width:14px;height:16px;border-top:1px solid #a0a8b4;background:linear-gradient(90deg,#f8f8f8,#eaeaea)"></div>
<svg class="a" style="left:253px;top:650px" width="10" height="6"><path d="M0 0 H9 L4.5 5.5Z" fill="#222"/></svg>
<div class="a" style="left:16px;top:661px;width:250px;height:16px;background:#ececec;border-top:1px solid #707888;border-bottom:1px solid #707888;border-left:2px solid #6a7080;border-right:1px solid #707070"></div>
<div class="a" style="left:18px;top:662px;width:15px;height:14px;background:#f6f6f6;border-right:1px solid #6a7488"></div>
<svg class="a" style="left:23px;top:665px" width="5" height="9"><path d="M4.5 0 V8.5 L0 4.25Z" fill="#111"/></svg>
<div class="a" style="left:33px;top:662px;width:132px;height:14px;border-left:1px solid #5a6a90;border-right:1px solid #5a6a90;background:linear-gradient(180deg,#dde8f6,#f4f8fc 35%,#c8d8ee)"></div>
<div class="a" style="left:97px;top:665px;width:1px;height:8px;background:#6a7aa0;box-shadow:2px 0 0 #6a7aa0,4px 0 0 #6a7aa0"></div>
<div class="a" style="left:234px;top:662px;width:16px;height:14px;background:#f4f4f4;border-left:1px solid #7a8090;border-right:1px solid #7a8090"></div>
<svg class="a" style="left:241px;top:665px" width="5" height="9"><path d="M0 0 V8.5 L4.5 4.25Z" fill="#111"/></svg>
<div class="a" style="left:266px;top:100px;width:11px;height:577px;background:#f6f6f6"></div>
<svg class="a" style="left:270px;top:100px" width="6" height="577"><defs><pattern id="dots" x="0" y="0" width="4" height="4" patternUnits="userSpaceOnUse"><rect x="1" y="1" width="1" height="1" fill="#8a8a8a"/><rect x="3" y="3" width="1" height="1" fill="#8a8a8a"/></pattern></defs><rect x="0" y="0" width="6" height="577" fill="url(#dots)"/></svg>
<div class="a" style="left:276px;top:100px;width:1px;height:577px;background:#6a7080"></div>
<svg class="a" style="left:267px;top:101px" width="8" height="24"><path d="M6 1 V10 L1 5.5Z" fill="#58607a"/><path d="M1 13 V22 L6 17.5Z" fill="#3a4a7a"/></svg>
<div class="a" style="left:277px;top:100px;width:871px;height:577px;background:#fff;border:1px solid #8a8e96;border-left-color:#5a6070;border-top:none"></div>
<svg class="a" style="left:0;top:0" width="1166" height="706" viewBox="0 0 1166 706">
<defs><clipPath id="cp"><rect x="278" y="100" width="870" height="576"/></clipPath></defs><g clip-path="url(#cp)">
<rect x="348.0" y="121" width="789" height="520" fill="none" stroke="#000" stroke-width="2"/>
<path d="M371.2 121 V126 M371.2 641 V636 M394.4 121 V126 M394.4 641 V636 M417.6 121 V126 M417.6 641 V636 M440.8 121 V126 M440.8 641 V636 M464.0 121 V126 M464.0 641 V636 M487.2 121 V126 M487.2 641 V636 M510.4 121 V126 M510.4 641 V636 M533.6 121 V126 M533.6 641 V636 M556.9 121 V126 M556.9 641 V636 M580.1 121 V126 M580.1 641 V636 M603.3 121 V126 M603.3 641 V636 M626.5 121 V126 M626.5 641 V636 M649.7 121 V126 M649.7 641 V636 M672.9 121 V126 M672.9 641 V636 M696.1 121 V126 M696.1 641 V636 M719.3 121 V126 M719.3 641 V636 M742.5 121 V126 M742.5 641 V636 M765.7 121 V126 M765.7 641 V636 M788.9 121 V126 M788.9 641 V636 M812.1 121 V126 M812.1 641 V636 M835.3 121 V126 M835.3 641 V636 M858.5 121 V126 M858.5 641 V636 M881.7 121 V126 M881.7 641 V636 M904.9 121 V126 M904.9 641 V636 M928.1 121 V126 M928.1 641 V636 M951.4 121 V126 M951.4 641 V636 M974.6 121 V126 M974.6 641 V636 M997.8 121 V126 M997.8 641 V636 M1021.0 121 V126 M1021.0 641 V636 M1044.2 121 V126 M1044.2 641 V636 M1067.4 121 V126 M1067.4 641 V636 M1090.6 121 V126 M1090.6 641 V636 M1113.8 121 V126 M1113.8 641 V636 M348 169.4 H353 M348 240.2 H353 M348 311.2 H353 M348 452.8 H353 M348 523.8 H353 M348 594.5 H353" stroke="#000" stroke-width="2" fill="none"/>
<rect x="348" y="380" width="790" height="4" fill="#00e800"/>
<polyline points="374.2,475 397.4,440 420.6,435 443.8,416.5 467.0,415.5 490.2,415 513.4,413 536.6,405.5 559.9,403.5 583.1,403 606.3,396.5 629.5,386.5 652.7,385.7 675.9,384 699.1,378.5 722.3,376.4 745.5,372.6 768.7,362.6 791.9,355.7 815.1,350 838.3,350 861.5,345 884.7,341.5 907.9,340 931.1,332 954.4,331 977.6,319 1000.8,298 1024.0,291.7 1047.2,268 1070.4,225 1093.6,225 1116.8,204.7 1140.0,121" fill="none" stroke="#f08a1a" stroke-width="3" stroke-linejoin="round"/>
<rect x="371.2" y="472" width="6" height="6" fill="#f08a1a"/>
<rect x="394.4" y="437" width="6" height="6" fill="#f08a1a"/>
<rect x="417.6" y="432" width="6" height="6" fill="#f08a1a"/>
<rect x="440.8" y="413.5" width="6" height="6" fill="#f08a1a"/>
<rect x="464.0" y="412.5" width="6" height="6" fill="#f08a1a"/>
<rect x="487.2" y="412" width="6" height="6" fill="#f08a1a"/>
<rect x="510.4" y="410" width="6" height="6" fill="#f08a1a"/>
<rect x="533.6" y="402.5" width="6" height="6" fill="#f08a1a"/>
<rect x="556.9" y="400.5" width="6" height="6" fill="#f08a1a"/>
<rect x="580.1" y="400" width="6" height="6" fill="#f08a1a"/>
<rect x="603.3" y="393.5" width="6" height="6" fill="#f08a1a"/>
<rect x="626.5" y="383.5" width="6" height="6" fill="#f08a1a"/>
<rect x="649.7" y="382.7" width="6" height="6" fill="#f08a1a"/>
<rect x="672.9" y="381" width="6" height="6" fill="#f08a1a"/>
<rect x="696.1" y="375.5" width="6" height="6" fill="#f08a1a"/>
<rect x="719.3" y="373.4" width="6" height="6" fill="#f08a1a"/>
<rect x="742.5" y="369.6" width="6" height="6" fill="#f08a1a"/>
<rect x="765.7" y="359.6" width="6" height="6" fill="#f08a1a"/>
<rect x="788.9" y="352.7" width="6" height="6" fill="#f08a1a"/>
<rect x="812.1" y="347" width="6" height="6" fill="#f08a1a"/>
<rect x="835.3" y="347" width="6" height="6" fill="#f08a1a"/>
<rect x="858.5" y="342" width="6" height="6" fill="#f08a1a"/>
<rect x="881.7" y="338.5" width="6" height="6" fill="#f08a1a"/>
<rect x="904.9" y="337" width="6" height="6" fill="#f08a1a"/>
<rect x="928.1" y="329" width="6" height="6" fill="#f08a1a"/>
<rect x="951.4" y="328" width="6" height="6" fill="#f08a1a"/>
<rect x="974.6" y="316" width="6" height="6" fill="#f08a1a"/>
<rect x="997.8" y="295" width="6" height="6" fill="#f08a1a"/>
<rect x="1021.0" y="288.7" width="6" height="6" fill="#f08a1a"/>
<rect x="1044.2" y="265" width="6" height="6" fill="#f08a1a"/>
<rect x="1067.4" y="222" width="6" height="6" fill="#f08a1a"/>
<rect x="1090.6" y="222" width="6" height="6" fill="#f08a1a"/>
<rect x="1113.8" y="201.7" width="6" height="6" fill="#f08a1a"/>
<rect x="1137.0" y="118" width="6" height="6" fill="#f08a1a"/>
<text x="302.5" y="103.0" font-family="Liberation Sans" font-size="12" letter-spacing="0.33" fill="#101048">1.89</text>
<text x="302.5" y="173.9" font-family="Liberation Sans" font-size="12" letter-spacing="0.33" fill="#101048">1.417</text>
<text x="302.5" y="244.8" font-family="Liberation Sans" font-size="12" letter-spacing="0.33" fill="#101048">0.945</text>
<text x="302.5" y="315.7" font-family="Liberation Sans" font-size="12" letter-spacing="0.33" fill="#101048">0.472</text>
<text x="302.5" y="457.3" font-family="Liberation Sans" font-size="12" letter-spacing="0.33" fill="#101048">-0.472</text>
<text x="302.5" y="528.2" font-family="Liberation Sans" font-size="12" letter-spacing="0.33" fill="#101048">-0.945</text>
<text x="302.5" y="599.0" font-family="Liberation Sans" font-size="12" letter-spacing="0.33" fill="#101048">-1.417</text>
<text x="302.5" y="670.0" font-family="Liberation Sans" font-size="12" letter-spacing="0.33" fill="#101048">-1.89</text>
<text transform="translate(373.7,666) rotate(-90)" font-family="Liberation Sans" font-size="12" letter-spacing="0.33" fill="#101010">1</text>
<text transform="translate(396.9,666) rotate(-90)" font-family="Liberation Sans" font-size="12" letter-spacing="0.33" fill="#101010">2</text>
<text transform="translate(420.1,666) rotate(-90)" font-family="Liberation Sans" font-size="12" letter-spacing="0.33" fill="#101010">3</text>
<text transform="translate(443.3,666) rotate(-90)" font-family="Liberation Sans" font-size="12" letter-spacing="0.33" fill="#101010">4</text>
<text transform="translate(466.5,666) rotate(-90)" font-family="Liberation Sans" font-size="12" letter-spacing="0.33" fill="#101010">5</text>
<text transform="translate(489.7,666) rotate(-90)" font-family="Liberation Sans" font-size="12" letter-spacing="0.33" fill="#101010">6</text>
<text transform="translate(512.9,666) rotate(-90)" font-family="Liberation Sans" font-size="12" letter-spacing="0.33" fill="#101010">7</text>
<text transform="translate(536.1,666) rotate(-90)" font-family="Liberation Sans" font-size="12" letter-spacing="0.33" fill="#101010">8</text>
<text transform="translate(559.4,666) rotate(-90)" font-family="Liberation Sans" font-size="12" letter-spacing="0.33" fill="#101010">9</text>
<text transform="translate(582.6,666) rotate(-90)" font-family="Liberation Sans" font-size="12" letter-spacing="0.33" fill="#101010">10</text>
<text transform="translate(605.8,666) rotate(-90)" font-family="Liberation Sans" font-size="12" letter-spacing="0.33" fill="#101010">11</text>
<text transform="translate(629.0,666) rotate(-90)" font-family="Liberation Sans" font-size="12" letter-spacing="0.33" fill="#101010">12</text>
<text transform="translate(652.2,666) rotate(-90)" font-family="Liberation Sans" font-size="12" letter-spacing="0.33" fill="#101010">13</text>
<text transform="translate(675.4,666) rotate(-90)" font-family="Liberation Sans" font-size="12" letter-spacing="0.33" fill="#101010">14</text>
<text transform="translate(698.6,666) rotate(-90)" font-family="Liberation Sans" font-size="12" letter-spacing="0.33" fill="#101010">15</text>
<text transform="translate(721.8,666) rotate(-90)" font-family="Liberation Sans" font-size="12" letter-spacing="0.33" fill="#101010">16</text>
<text transform="translate(745.0,666) rotate(-90)" font-family="Liberation Sans" font-size="12" letter-spacing="0.33" fill="#101010">17</text>
<text transform="translate(768.2,666) rotate(-90)" font-family="Liberation Sans" font-size="12" letter-spacing="0.33" fill="#101010">18</text>
<text transform="translate(791.4,666) rotate(-90)" font-family="Liberation Sans" font-size="12" letter-spacing="0.33" fill="#101010">19</text>
<text transform="translate(814.6,666) rotate(-90)" font-family="Liberation Sans" font-size="12" letter-spacing="0.33" fill="#101010">20</text>
<text transform="translate(837.8,666) rotate(-90)" font-family="Liberation Sans" font-size="12" letter-spacing="0.33" fill="#101010">21</text>
<text transform="translate(861.0,666) rotate(-90)" font-family="Liberation Sans" font-size="12" letter-spacing="0.33" fill="#101010">22</text>
<text transform="translate(884.2,666) rotate(-90)" font-family="Liberation Sans" font-size="12" letter-spacing="0.33" fill="#101010">23</text>
<text transform="translate(907.4,666) rotate(-90)" font-family="Liberation Sans" font-size="12" letter-spacing="0.33" fill="#101010">24</text>
<text transform="translate(930.6,666) rotate(-90)" font-family="Liberation Sans" font-size="12" letter-spacing="0.33" fill="#101010">25</text>
<text transform="translate(953.9,666) rotate(-90)" font-family="Liberation Sans" font-size="12" letter-spacing="0.33" fill="#101010">26</text>
<text transform="translate(977.1,666) rotate(-90)" font-family="Liberation Sans" font-size="12" letter-spacing="0.33" fill="#101010">27</text>
<text transform="translate(1000.3,666) rotate(-90)" font-family="Liberation Sans" font-size="12" letter-spacing="0.33" fill="#101010">28</text>
<text transform="translate(1023.5,666) rotate(-90)" font-family="Liberation Sans" font-size="12" letter-spacing="0.33" fill="#101010">29</text>
<text transform="translate(1046.7,666) rotate(-90)" font-family="Liberation Sans" font-size="12" letter-spacing="0.33" fill="#101010">30</text>
<text transform="translate(1069.9,666) rotate(-90)" font-family="Liberation Sans" font-size="12" letter-spacing="0.33" fill="#101010">31</text>
<text transform="translate(1093.1,666) rotate(-90)" font-family="Liberation Sans" font-size="12" letter-spacing="0.33" fill="#101010">32</text>
<text transform="translate(1116.3,666) rotate(-90)" font-family="Liberation Sans" font-size="12" letter-spacing="0.33" fill="#101010">33</text>
<text transform="translate(1139.5,666) rotate(-90)" font-family="Liberation Sans" font-size="12" letter-spacing="0.33" fill="#101010">34</text>
<text x="712" y="676" font-family="Liberation Sans" font-size="12" letter-spacing="0.1" fill="#333">Gene Indices</text>
<text transform="translate(297,381.5) rotate(-90)" font-family="Liberation Sans" font-size="12" letter-spacing="0.25" fill="#404040">Test Statistic</text>
<text x="358.5" y="141" font-family="Liberation Sans" font-size="12" letter-spacing="0.4" fill="#101048">34 Genes</text>
<text x="445" y="396" font-family="Liberation Sans" font-size="12" fill="#101048">Gene: SH3PXD2A</text>
<text x="445" y="416" font-family="Liberation Sans" font-size="12" letter-spacing="0.25" fill="#101048">Test stat:-0.23424673</text>
</g></svg>
<div class="a" style="left:16px;top:100px;width:1135px;height:1px;background:#9a9a9a"></div>
<div class="a" style="left:16px;top:677px;width:1135px;height:18px;background:#f0f0f0"></div>
<div class="t" style="left:15px;top:681px;font-weight:bold;color:#222;-webkit-text-stroke:0.2px #222">MultiExperiment Viewer</div>
</div></body></html>
